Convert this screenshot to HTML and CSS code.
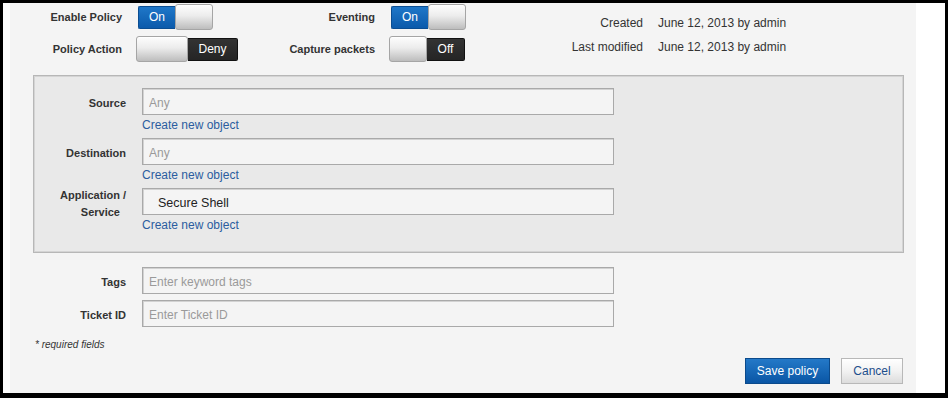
FILE: index.html
```html
<!DOCTYPE html>
<html>
<head>
<meta charset="utf-8">
<link rel="stylesheet" href="styles.css">
</head>
<body>
<div class="frame">
  <div class="panel">
    <div class="top">
      <div class="switches">
        <span class="lbl">Enable Policy</span>
        <span class="toggle"><span class="track on">On</span><span class="knob"></span></span>
        <span class="lbl">Eventing</span>
        <span class="toggle"><span class="track on">On</span><span class="knob"></span></span>
        <span class="lbl">Policy Action</span>
        <span class="toggle shifted wide"><span class="knob"></span><span class="track dark">Deny</span></span>
        <span class="lbl">Capture packets</span>
        <span class="toggle shifted"><span class="knob"></span><span class="track dark">Off</span></span>
      </div>
      <div class="meta">
        <span class="meta-lbl">Created</span><span class="meta-val">June 12, 2013 by admin</span>
        <span class="meta-lbl">Last modified</span><span class="meta-val">June 12, 2013 by admin</span>
      </div>
    </div>

    <div class="box">
      <div class="field">
        <label class="flbl">Source</label>
        <div class="ctrl">
          <input class="inp" type="text" placeholder="Any">
          <a class="link" href="#">Create new object</a>
        </div>
      </div>
      <div class="field">
        <label class="flbl">Destination</label>
        <div class="ctrl">
          <input class="inp" type="text" placeholder="Any">
          <a class="link" href="#">Create new object</a>
        </div>
      </div>
      <div class="field">
        <label class="flbl two"><span class="l1">Application /</span><span class="l2">Service</span></label>
        <div class="ctrl">
          <input class="inp token" type="text" value="Secure Shell">
          <a class="link" href="#">Create new object</a>
        </div>
      </div>
    </div>

    <div class="extra">
      <div class="field tight">
        <label class="flbl">Tags</label>
        <div class="ctrl"><input class="inp" type="text" placeholder="Enter keyword tags"></div>
      </div>
      <div class="field tight">
        <label class="flbl">Ticket ID</label>
        <div class="ctrl"><input class="inp" type="text" placeholder="Enter Ticket ID"></div>
      </div>
    </div>

    <p class="req">* required fields</p>

    <div class="actions">
      <button class="btn primary" type="button">Save policy</button>
      <button class="btn secondary" type="button">Cancel</button>
    </div>
  </div>
</div>
</body>
</html>
```
FILE: styles.css
```css
* { box-sizing: border-box; }
html, body { margin: 0; padding: 0; }
body {
  background: #000;
  font-family: "Liberation Sans", Arial, sans-serif;
  font-size: 12px;
  color: #333;
  width: 948px;
  height: 398px;
  overflow: hidden;
}
.frame {
  margin: 3px;
  width: 942px;
  height: 390px;
  background: #fff;
  padding: 0 29px 0 7px;
  display: flex;
}
.panel {
  flex: 1;
  background: #f4f4f4;
  display: flex;
  flex-direction: column;
}
.top {
  display: flex;
  align-items: flex-start;
}
.switches {
  display: grid;
  grid-template-columns: 112px 104px 117px 110px;
  grid-auto-rows: 26px;
  column-gap: 16px;
  row-gap: 6px;
  align-items: center;
  padding-top: 1px;
}
.lbl {
  text-align: right;
  font-weight: bold;
  font-size: 11px;
  color: #333;
}
.toggle {
  display: inline-flex;
  align-items: center;
  height: 26px;
}
.toggle.shifted { margin-left: -2px; }
.track {
  height: 23px;
  width: 37px;
  display: flex;
  align-items: center;
  justify-content: center;
  color: #fff;
  font-size: 12px;
}
.track.on {
  background: linear-gradient(#1f77c8, #0b5aab);
  border: 1px solid #0a4d92;
  border-right: none;
  border-radius: 2px 0 0 2px;
}
.track.dark {
  width: 38px;
  background: linear-gradient(#333, #252525);
  border: 1px solid #111;
  border-left: none;
  border-radius: 0 2px 2px 0;
}
.knob {
  width: 38px;
  height: 26px;
  border: 1px solid #a5a5a5;
  border-radius: 3px;
  background: linear-gradient(#fdfdfd, #ececec 45%, #bdbdbd);
  box-shadow: inset 0 1px 0 #fff;
}
.toggle.wide .knob { width: 52px; }
.toggle.wide .track.dark { width: 50px; }

.meta {
  display: grid;
  grid-template-columns: 100px auto;
  column-gap: 15px;
  line-height: 24px;
  margin-left: 42px;
  padding-top: 8px;
  color: #333;
}
.meta-lbl { text-align: right; }

.box {
  margin: 13px 0 0 23px;
  width: 871px;
  background: #e9e9e9;
  border: 1px solid #b7b7b7;
  box-shadow: inset 1px 1px 0 #d4d4d4, inset -1px -1px 0 #d4d4d4;
  padding: 12px 0 19px 1px;
}
.field {
  display: grid;
  grid-template-columns: 91px 472px;
  column-gap: 16px;
  align-items: start;
}
.field + .field { margin-top: 5px; }
.field.tight + .field.tight { margin-top: 6px; }
.flbl {
  text-align: right;
  font-weight: bold;
  font-size: 11px;
  line-height: 17px;
  padding-top: 7px;
  color: #333;
}
.flbl.two {
  padding-top: 0;
  margin-top: -1px;
}
.flbl .l1, .flbl .l2 { display: block; }
.flbl .l2 { margin-right: 6px; }
.ctrl { display: flex; flex-direction: column; align-items: flex-start; }
.inp {
  width: 472px;
  height: 27px;
  margin: 0;
  border: 1px solid #a9a9a9;
  box-shadow: inset 1px 1px 0 #d2d2d2;
  background: #f4f4f4;
  padding: 3px 0 0 6px;
  font-family: "Liberation Sans", Arial, sans-serif;
  font-size: 12px;
  color: #222;
  outline: none;
}
.inp::placeholder { color: #9a9a9a; opacity: 1; }
.inp.token { padding-left: 15px; font-size: 12.5px; }
.link {
  margin-top: 2px;
  line-height: 16px;
  color: #2b5d9f;
  text-decoration: none;
  font-size: 12px;
}

.extra {
  margin-top: 14px;
  padding-left: 25px;
}
.req {
  margin: 11px 0 0 25px;
  font-style: italic;
  font-size: 10px;
  line-height: 14px;
  color: #333;
}
.actions {
  display: flex;
  justify-content: flex-end;
  gap: 11px;
  margin-top: 6px;
  padding-right: 13px;
}
.btn {
  height: 26px;
  margin: 0;
  font-family: "Liberation Sans", Arial, sans-serif;
  font-size: 12px;
  padding: 0;
  cursor: pointer;
}
.btn.primary {
  width: 85px;
  color: #fff;
  background: linear-gradient(#2479c8, #0a56a5);
  border: 1px solid #0b4a8b;
}
.btn.secondary {
  width: 62px;
  color: #1d4e8c;
  background: linear-gradient(#ffffff, #f2f2f2 50%, #dcdcdc);
  border: 1px solid #b8b8b8;
}
```
